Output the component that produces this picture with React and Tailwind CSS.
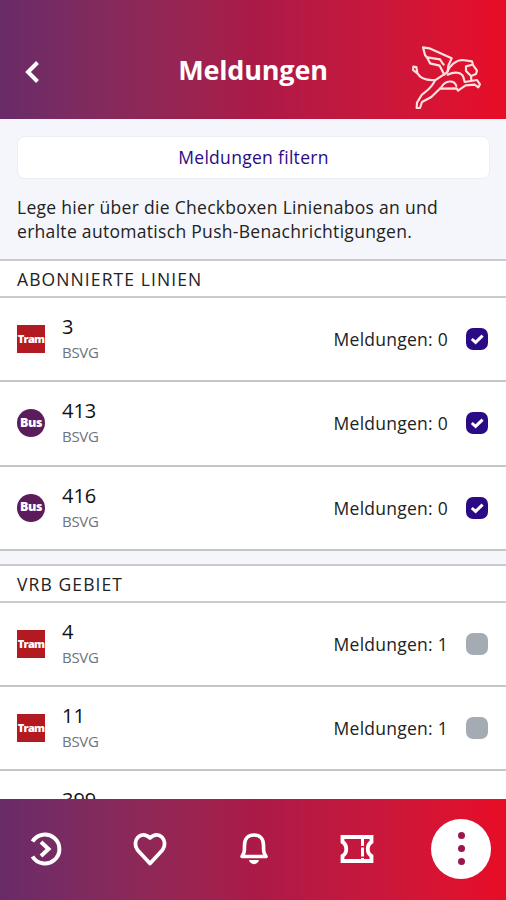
import clsx from "clsx"

const subscribed = [
  { line: "3", type: "tram", count: 0, active: true },
  { line: "413", type: "bus", count: 0, active: true },
  { line: "416", type: "bus", count: 0, active: true },
]

const region = [
  { line: "4", type: "tram", count: 1, active: false },
  { line: "11", type: "tram", count: 1, active: false },
]

function LionLogo() {
  return (
    <svg
      className="h-[80px] w-[95px]"
      viewBox="0 0 285 240"
      fill="none"
      stroke="#ffe1df"
      strokeWidth="6.5"
      strokeLinecap="round"
      strokeLinejoin="round"
    >
      {/* wing */}
      <path d="M133 119 L119 92 L90 85 L82 69 L75 60 L69 37 L88 40 L155 70 L145 92 L143 110" />
      <path d="M82 67 L120 73 L127 84 L131 89" />
      {/* head and mane */}
      <path d="M141 112 C148 92 168 75 188 75 L216 79 L219 90 L231 107 L228 117 L213 123 L198 108 L198 94 L214 90" />
      {/* tail */}
      <path d="M105 135 C80 137 62 131 53 116 L39 105 L40 95 L49 96 L52 114" />
      {/* back and hind leg */}
      <path d="M141 112 L105 136 C94 160 82 166 65 180 L51 203 L50 219 L60 219 L66 201 L94 186 L124 157 C136 135 163 134 169 153" />
      {/* chest and front leg */}
      <path d="M143 119 C165 108 185 112 190 126 L194 141 L231 135 L240 148 L235 157 L224 149 L197 151 L174 167 L170 160 L120 161" />
      <path d="M213 123 L214 136" />
    </svg>
  )
}

function LineBadge({ type }) {
  return (
    <div
      className={clsx(
        "flex size-[28px] shrink-0 items-center justify-center font-extrabold text-white",
        type === "tram" ? "bg-[#b51920] text-[11px] tracking-[-0.7px]" : "rounded-full bg-[#5c1c5c] text-[12.5px] tracking-[-0.4px]"
      )}
    >
      {type === "tram" ? "Tram" : "Bus"}
    </div>
  )
}

function Checkbox({ checked }) {
  return (
    <div className={clsx("flex size-[22px] items-center justify-center rounded-[7px]", checked ? "bg-[#2b0a85]" : "bg-[#a5abb2]")}>
      {checked && (
        <svg className="size-[22px]" viewBox="0 0 22 22" fill="none" stroke="white" strokeWidth="3">
          <path d="M5.8 11 L9.6 14.4 L16.6 7.6" />
        </svg>
      )}
    </div>
  )
}

function LineRow({ item }) {
  return (
    <div className="flex h-[84.3px] shrink-0 items-center border-b-2 border-[#c3c7c8] bg-white pr-[18px] pl-[17px]">
      <LineBadge type={item.type} />
      <div className="ml-[17px] flex-1">
        <div className="text-[20px] leading-[26px] text-[#111]">{item.line}</div>
        <div className="text-[15px] leading-[24px] tracking-[-0.3px] text-[#6d747a]">BSVG</div>
      </div>
      <div className="mr-[18px] text-[17.5px] tracking-[0.25px] text-[#222]">Meldungen: {item.count}</div>
      <Checkbox checked={item.active} />
    </div>
  )
}

function SectionTitle({ children }) {
  return (
    <div className="flex h-[39px] shrink-0 items-center border-y-2 border-[#c9cccf] bg-white pt-[2px] pl-[17px] text-[17.5px] tracking-[1.1px] text-[#222]">
      {children}
    </div>
  )
}

function NavItem({ children }) {
  return <div className="flex w-[60px] justify-center">{children}</div>
}

function BottomNav() {
  return (
    <nav className="flex h-[101px] shrink-0 items-center justify-between bg-linear-to-r from-[#692b68] via-[#ab1a47] to-[#e80c26] pr-[15px] pb-[2px] pl-4">
      <NavItem>
        <svg className="size-9" viewBox="0 0 36 36" fill="none" stroke="white" strokeWidth="4">
          <path d="M4.5 10.5 A14.5 14.5 0 1 1 4.5 25.5" />
          <path d="M13 11 L20.5 18 L13 25" />
        </svg>
      </NavItem>
      <NavItem>
        <svg className="size-9" viewBox="0 0 36 36" fill="none" stroke="white" strokeWidth="3.8" strokeLinejoin="round">
          <path d="M18 32.5 L5.5 19 C-1 10 9 -2 18 7 C27 -2 37 10 30.5 19 Z" />
        </svg>
      </NavItem>
      <NavItem>
        <svg className="size-9" viewBox="0 0 36 36" fill="none" stroke="white" strokeWidth="3.6" strokeLinejoin="round">
          <path d="M6 25.5 C8.5 22 8.5 20 8.5 14 C8.5 8 12 4 18 4 C24 4 27.5 8 27.5 14 C27.5 20 27.5 22 30 25.5 Z" />
          <path d="M13 29 H23 C22 34.5 14 34.5 13 29 Z" fill="white" stroke="none" />
        </svg>
      </NavItem>
      <NavItem>
        <svg className="size-9" viewBox="0 0 36 36" fill="none" stroke="white" strokeWidth="3.8">
          <path d="M3.5 6 H32.5 V11 C27.5 14 27.5 22 32.5 25 V30 H3.5 V25 C8.5 22 8.5 14 3.5 11 Z" />
          <path d="M23.5 6 V30" strokeDasharray="9 1.5" strokeWidth="3" />
        </svg>
      </NavItem>
      <NavItem>
        <div className="flex size-[60px] flex-col items-center justify-center gap-[6px] rounded-full bg-white">
          <div className="size-[7px] rounded-full bg-[#9b164c]" />
          <div className="size-[7px] rounded-full bg-[#9b164c]" />
          <div className="size-[7px] rounded-full bg-[#9b164c]" />
        </div>
      </NavItem>
    </nav>
  )
}

function App() {
  return (
    <div className="flex h-[900px] w-[506px] flex-col overflow-hidden bg-[#f5f6fb] font-['Open_Sans',sans-serif]">
      <header className="flex h-[119px] shrink-0 items-start justify-between bg-linear-to-r from-[#692b68] via-[#ab1a47] to-[#e80c26]">
        <div className="mt-[61px] ml-[25px] w-[81px]">
          <svg className="h-[22px] w-[14px]" viewBox="0 0 14 22" fill="none" stroke="white" strokeWidth="4">
            <path d="M12.5 1.5 L3 11 L12.5 20.5" />
          </svg>
        </div>
        <h1 className="mt-[51px] text-[27px] leading-[38px] font-bold tracking-[-0.2px] text-white">Meldungen</h1>
        <div className="mt-[35px] mr-[11px]">
          <LionLogo />
        </div>
      </header>

      <main className="flex flex-1 flex-col overflow-hidden">
        <div className="h-[140px] shrink-0 pt-[17px] pr-4 pl-[17px]">
          <button className="h-[43px] w-full rounded-lg border border-[#eceef3] bg-white text-[17.5px] tracking-[0.3px] text-[#2b0a85]">
            Meldungen filtern
          </button>
          <p className="mt-4 text-[17.5px] leading-[24px] tracking-[0.3px] text-[#222]">
            Lege hier über die Checkboxen Linienabos an und
            <br />
            erhalte automatisch Push-Benachrichtigungen.
          </p>
        </div>

        <SectionTitle>ABONNIERTE LINIEN</SectionTitle>
        {subscribed.map((item) => (
          <LineRow key={item.line} item={item} />
        ))}

        <div className="h-[13px] shrink-0" />

        <SectionTitle>VRB GEBIET</SectionTitle>
        {region.map((item) => (
          <LineRow key={item.line} item={item} />
        ))}
        {/* next row, mostly hidden behind the nav */}
        <div className="flex-1 overflow-hidden bg-white pt-4 pl-[62px]">
          <div className="text-[20px] leading-[26px] text-[#111]">399</div>
        </div>
      </main>

      <BottomNav />
    </div>
  )
}

export default App
